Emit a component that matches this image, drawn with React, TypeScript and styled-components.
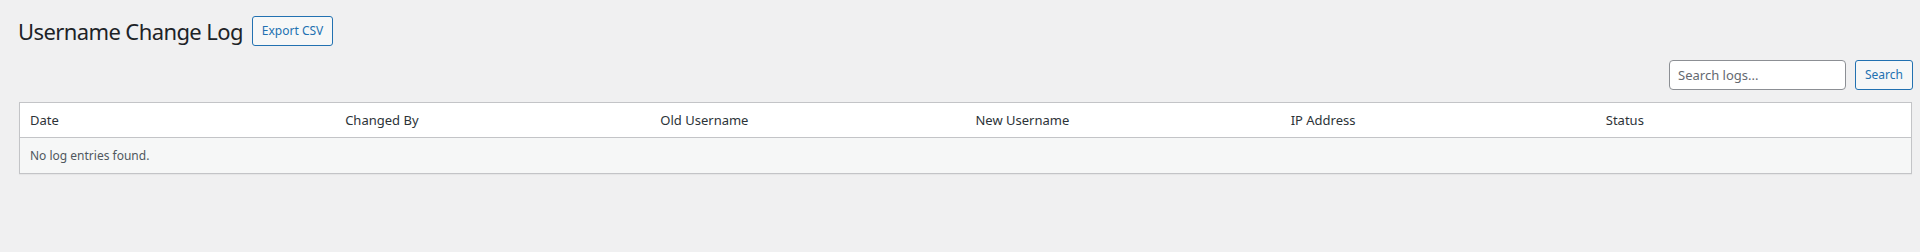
import React from "react";
import styled, { createGlobalStyle } from "styled-components";

const GlobalStyle = createGlobalStyle`
  html, body {
    margin: 0;
    padding: 0;
    background: #f0f0f1;
  }
  body {
    font-family: "Segoe UI", "Noto Sans", "Open Sans", sans-serif;
    color: #3c434a;
  }
`;

const columns = ["Date", "Changed By", "Old Username", "New Username", "IP Address", "Status"];

function App() {
  return (
    <>
      <GlobalStyle />
      <Wrap>
        <TitleRow>
          <Title>Username Change Log</Title>
          <OutlineButton>Export CSV</OutlineButton>
        </TitleRow>

        <SearchBox>
          <SearchInput type="search" placeholder="Search logs..." />
          <OutlineButton>Search</OutlineButton>
        </SearchBox>

        <Table>
          <thead>
            <tr>
              {columns.map((c) => (
                <th key={c}>{c}</th>
              ))}
            </tr>
          </thead>
          <tbody>
            <tr>
              <td colSpan={6}>No log entries found.</td>
            </tr>
          </tbody>
        </Table>
      </Wrap>
    </>
  );
}

const Wrap = styled.div`
  padding: 0 8px 0 19px;
  height: 252px;
  box-sizing: border-box;
`;

const TitleRow = styled.div`
  display: flex;
  align-items: center;
  gap: 9px;
  padding-top: 16px;
  margin-left: -1px;
`;

const Title = styled.h1`
  margin: 0;
  font-size: 22px;
  font-weight: 400;
  line-height: 30px;
  color: #1d2327;
  letter-spacing: -0.6px;
`;

const OutlineButton = styled.button`
  height: 30px;
  padding: 0 9px;
  border: 1px solid #2271b1;
  border-radius: 3px;
  background: #f6f7f7;
  color: #2271b1;
  font-family: inherit;
  font-size: 12px;
  line-height: 28px;
  box-sizing: border-box;
  cursor: pointer;
`;

const SearchBox = styled.div`
  display: flex;
  justify-content: flex-end;
  gap: 9px;
  margin-top: 14px;
  margin-right: -1px;
`;

const SearchInput = styled.input`
  width: 177px;
  height: 30px;
  box-sizing: border-box;
  padding: 0 8px;
  border: 1px solid #8c8f94;
  border-radius: 4px;
  background: #fff;
  font-family: inherit;
  font-size: 13px;
  color: #2c3338;
  outline: none;

  &::placeholder {
    color: #646970;
  }
`;

const Table = styled.table`
  width: 100%;
  margin-top: 12px;
  border: 1px solid #c3c4c7;
  border-spacing: 0;
  table-layout: fixed;
  background: #fff;
  box-shadow: 0 1px 1px rgba(0, 0, 0, 0.04);

  & th {
    height: 34px;
    padding: 0 10px;
    text-align: left;
    font-size: 13px;
    font-weight: 400;
    color: #2c3338;
    border-bottom: 1px solid #c3c4c7;
  }

  & td {
    height: 35px;
    padding: 0 10px;
    font-size: 12px;
    color: #50575e;
    background: #f6f7f7;
  }
`;

export default App;
